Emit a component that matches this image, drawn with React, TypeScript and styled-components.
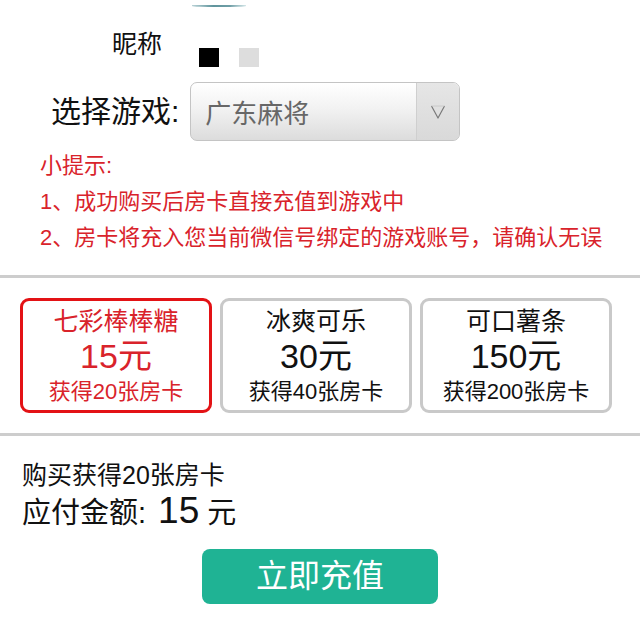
import React, { useState } from 'react';
import styled, { createGlobalStyle } from 'styled-components';

const GlobalStyle = createGlobalStyle`
  html, body {
    margin: 0;
    padding: 0;
    background: #ffffff;
  }
  body {
    font-family: "Liberation Sans", "Noto Sans CJK SC", sans-serif;
    color: #111111;
  }
`;

const colors = {
  red: '#d9232b',
  redBorder: '#e31215',
  grey: '#c9c9c9',
  green: '#1fb394',
};

type Product = {
  name: string;
  price: number;
  cards: number;
};

const products: Product[] = [
  { name: '七彩棒棒糖', price: 15, cards: 20 },
  { name: '冰爽可乐', price: 30, cards: 40 },
  { name: '可口薯条', price: 150, cards: 200 },
];

export default function App() {
  const [selected, setSelected] = useState(0);
  const current = products[selected];

  return (
    <Page>
      <GlobalStyle />
      <AvatarEdge />
      <NickRow>
        <NickLabel>昵称</NickLabel>
        <Swatch $color='#000000' />
        <Swatch $color='#dddddd' />
      </NickRow>
      <GameRow>
        <GameLabel>选择游戏:</GameLabel>
        <Select>
          <SelectText>广东麻将</SelectText>
          <SelectArrow>
            <svg width='16' height='16' viewBox='0 0 16 16'>
              <path d='M1.5 2 L8 14 L14.5 2' fill='none' stroke='#7a7a7a' strokeWidth='1.2' strokeLinejoin='round' />
              <path d='M1.5 2 L14.5 2' fill='none' stroke='#c4c4c4' strokeWidth='0.8' />
            </svg>
          </SelectArrow>
        </Select>
      </GameRow>
      <Tips>
        <TipLine>小提示:</TipLine>
        <TipLine>1、成功购买后房卡直接充值到游戏中</TipLine>
        <TipLine>2、房卡将充入您当前微信号绑定的游戏账号，请确认无误</TipLine>
      </Tips>
      <Divider />
      <Cards>
        {products.map((p, i) => (
          <Card key={p.name} $active={i === selected} onClick={() => setSelected(i)}>
            <CardName>{p.name}</CardName>
            <CardPrice>{p.price}元</CardPrice>
            <CardSub>获得{p.cards}张房卡</CardSub>
          </Card>
        ))}
      </Cards>
      <Divider $gap={20} />
      <Summary>
        <SummaryLine>购买获得{current.cards}张房卡</SummaryLine>
        <AmountLine>
          应付金额:<Amount>{current.price}</Amount> 元
        </AmountLine>
      </Summary>
      <ButtonRow>
        <PayButton>立即充值</PayButton>
      </ButtonRow>
    </Page>
  );
}

const Page = styled.div`
  width: 640px;
  height: 632px;
  overflow: hidden;
  display: flex;
  flex-direction: column;
`;

const AvatarEdge = styled.div`
  margin: 5px 0 0 192px;
  width: 54px;
  height: 2px;
  border-radius: 0 0 50% 50%;
  background: linear-gradient(to right, #b9d2d6, #5f949c 40%, #6f9ea6 70%, #d4e6e8);
`;

const NickRow = styled.div`
  margin-top: 22px;
  height: 40px;
  display: flex;
  align-items: flex-start;
  padding-left: 112px;
`;

const NickLabel = styled.div`
  font-size: 25px;
  line-height: 30px;
  color: #111111;
  margin-right: 37px;
`;

const Swatch = styled.div<{ $color: string }>`
  width: 20px;
  height: 19px;
  margin-top: 19px;
  margin-right: 20px;
  background: ${({ $color }) => $color};
`;

const GameRow = styled.div`
  margin-top: 13px;
  height: 59px;
  display: flex;
  align-items: center;
  padding-left: 51px;
`;

const GameLabel = styled.div`
  font-size: 30px;
  line-height: 36px;
  color: #111111;
  margin-right: 11px;
`;

const Select = styled.div`
  box-sizing: border-box;
  width: 270px;
  height: 59px;
  display: flex;
  border: 1px solid #c4c4c4;
  border-radius: 7px;
  background: linear-gradient(to bottom, #ffffff, #f2f2f2 45%, #dcdcdc);
  overflow: hidden;
`;

const SelectText = styled.div`
  flex: 1;
  display: flex;
  align-items: center;
  padding-left: 14px;
  font-size: 26px;
  color: #676767;
`;

const SelectArrow = styled.div`
  width: 42px;
  display: flex;
  align-items: center;
  justify-content: center;
  border-left: 1px solid #cfcfcf;
  background: linear-gradient(to bottom, #e6e6e6, #d9d9d9);
`;

const Tips = styled.div`
  margin-top: 7px;
  padding-left: 40px;
  color: ${colors.red};
`;

const TipLine = styled.div`
  font-size: 22px;
  line-height: 36px;
  white-space: nowrap;
`;

const Divider = styled.div<{ $gap?: number }>`
  margin-top: ${({ $gap }) => $gap ?? 19}px;
  height: 3px;
  background: #cdcdcd;
`;

const Cards = styled.div`
  margin-top: 20px;
  padding-left: 20px;
  display: flex;
  gap: 8px;
`;

const Card = styled.div<{ $active: boolean }>`
  box-sizing: border-box;
  width: 192px;
  height: 115px;
  border: 3px solid ${({ $active }) => ($active ? colors.redBorder : colors.grey)};
  border-radius: 9px;
  padding-top: 5px;
  display: flex;
  flex-direction: column;
  align-items: center;
  color: ${({ $active }) => ($active ? colors.red : '#111111')};
  cursor: pointer;
`;

const CardName = styled.div`
  font-size: 25px;
  line-height: 30px;
`;

const CardPrice = styled.div`
  font-size: 34px;
  line-height: 36px;
  margin-top: 2px;
`;

const CardSub = styled.div`
  font-size: 22px;
  line-height: 28px;
  margin-top: 4px;
`;

const Summary = styled.div`
  margin-top: 23px;
  padding-left: 22px;
`;

const SummaryLine = styled.div`
  font-size: 25px;
  line-height: 32px;
`;

const AmountLine = styled.div`
  margin-top: 2px;
  font-size: 29px;
  line-height: 36px;
`;

const Amount = styled.span`
  font-size: 37px;
  margin-left: 12px;
`;

const ButtonRow = styled.div`
  margin-top: 18px;
  display: flex;
  justify-content: center;
`;

const PayButton = styled.button`
  width: 236px;
  height: 55px;
  border: none;
  border-radius: 8px;
  background: ${colors.green};
  color: #ffffff;
  font-family: "Liberation Sans", "Noto Sans CJK SC", sans-serif;
  font-size: 32px;
  line-height: 55px;
  padding: 0;
  cursor: pointer;
`;
